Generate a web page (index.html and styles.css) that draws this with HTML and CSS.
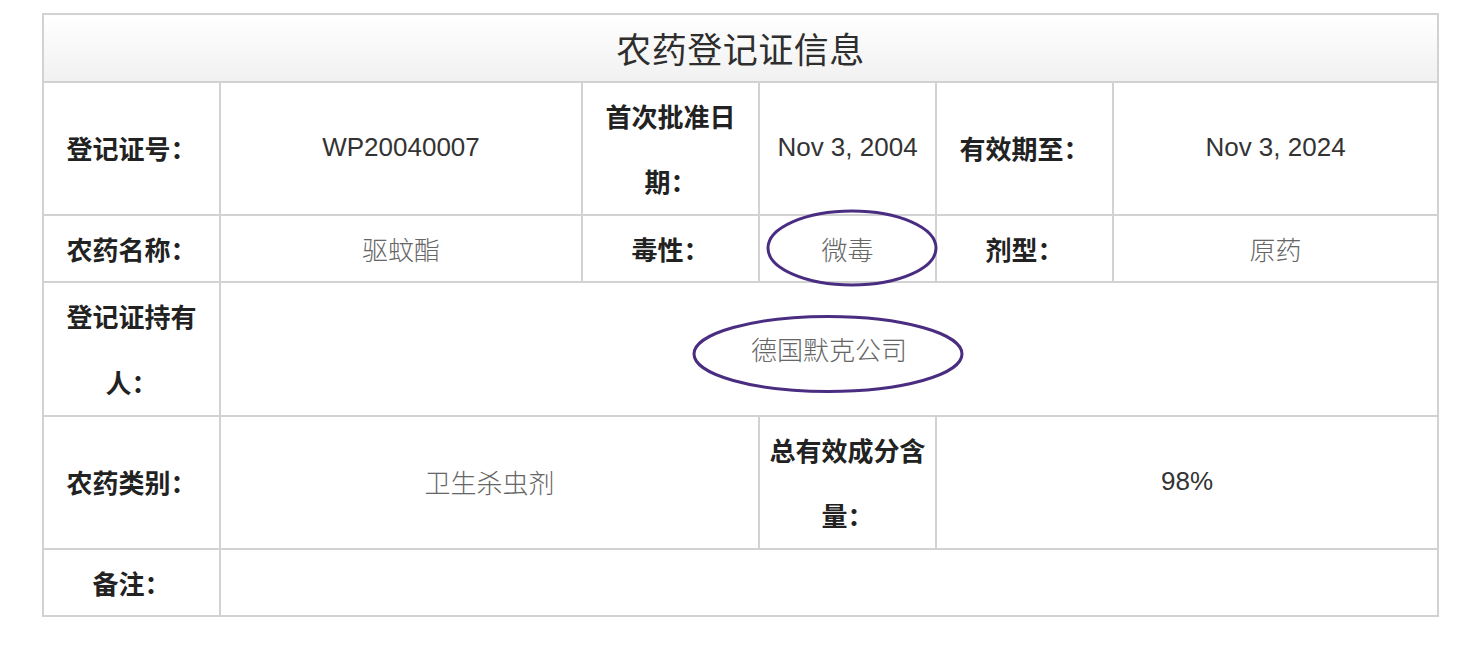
FILE: index.html
```html
<!DOCTYPE html>
<html lang="zh-CN">
<head>
<meta charset="utf-8">
<title>农药登记证信息</title>
<link rel="stylesheet" href="styles.css">
</head>
<body>
<div class="wrap">
  <table class="info">
    <colgroup>
      <col class="c-label">
      <col class="c-wide">
      <col class="c-label">
      <col class="c-label">
      <col class="c-label">
      <col class="c-last">
    </colgroup>
    <thead>
      <tr><th class="title" colspan="6">农药登记证信息</th></tr>
    </thead>
    <tbody>
      <tr>
        <td class="lbl">登记证号：</td>
        <td class="val">WP20040007</td>
        <td class="lbl">首次批准日期：</td>
        <td class="val">Nov 3, 2004</td>
        <td class="lbl">有效期至：</td>
        <td class="val">Nov 3, 2024</td>
      </tr>
      <tr>
        <td class="lbl">农药名称：</td>
        <td class="val cn">驱蚊酯</td>
        <td class="lbl">毒性：</td>
        <td class="val cn">微毒</td>
        <td class="lbl">剂型：</td>
        <td class="val cn">原药</td>
      </tr>
      <tr>
        <td class="lbl">登记证持有人：</td>
        <td class="val cn" colspan="5">德国默克公司</td>
      </tr>
      <tr>
        <td class="lbl">农药类别：</td>
        <td class="val cn" colspan="2">卫生杀虫剂</td>
        <td class="lbl">总有效成分含量：</td>
        <td class="val" colspan="2">98%</td>
      </tr>
      <tr>
        <td class="lbl">备注：</td>
        <td class="val" colspan="5"></td>
      </tr>
    </tbody>
  </table>
  <svg class="marks" width="1468" height="650" viewBox="0 0 1468 650" aria-hidden="true">
    <ellipse cx="852" cy="248" rx="84" ry="37" />
    <ellipse cx="828" cy="354" rx="134" ry="37.5" />
  </svg>
</div>
</body>
</html>
```

FILE: styles.css
```css
html, body {
  margin: 0;
  padding: 0;
  background: #fff;
}

.wrap {
  position: relative;
  padding: 13px 0 0 42px;
  width: 1468px;
  height: 650px;
  box-sizing: border-box;
}

.info {
  border-collapse: collapse;
  table-layout: fixed;
  width: 1397px;
  font-family: "Liberation Sans", "Noto Sans CJK SC", sans-serif;
  font-size: 26px;
}

.c-label { width: 177px; }
.c-wide { width: 362px; }
.c-last { width: 325px; }

.info th,
.info td {
  border: 2px solid #d2d2d2;
  padding: 0 6px;
  line-height: 65.6px;
  text-align: center;
  vertical-align: middle;
  word-break: break-all;
}

.title {
  font-family: "Noto Sans CJK SC", sans-serif;
  font-size: 35px;
  font-weight: 400;
  color: #2e2e2e;
  letter-spacing: 0.5px;
  background: linear-gradient(#ffffff, #f1f1f1);
}

.title-row {
  height: 67px;
}

.lbl {
  font-family: "Noto Sans CJK SC", sans-serif;
  font-weight: 700;
  color: #222;
}

.val {
  color: #333;
}

.val.cn {
  font-family: "Noto Sans CJK SC", sans-serif;
  font-weight: 300;
  color: #666;
}

.marks {
  position: absolute;
  left: 0;
  top: 0;
  pointer-events: none;
}

.marks ellipse {
  fill: none;
  stroke: #4a2d80;
  stroke-width: 3;
}
```
